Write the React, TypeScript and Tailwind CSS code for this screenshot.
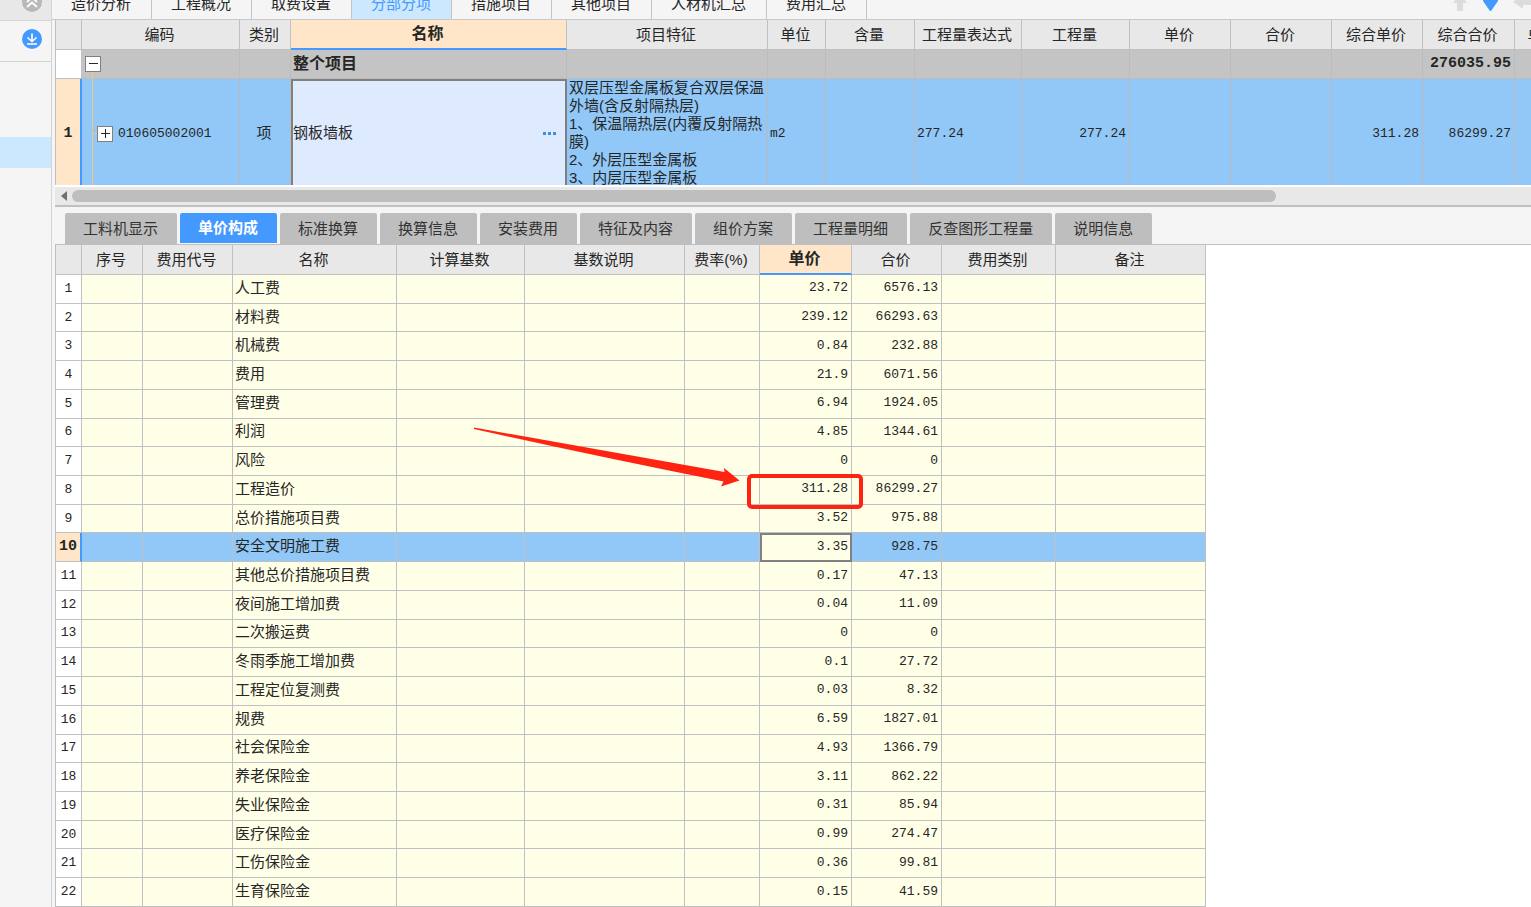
import React, { useState } from 'react';
import clsx from 'clsx';

interface FeeRow {
  name: string;
  price: string;
  total: string;
}

const TOP_TABS = ['造价分析', '工程概况', '取费设置', '分部分项', '措施项目', '其他项目', '人材机汇总', '费用汇总'];

const DETAIL_TABS = [
  '工料机显示',
  '单价构成',
  '标准换算',
  '换算信息',
  '安装费用',
  '特征及内容',
  '组价方案',
  '工程量明细',
  '反查图形工程量',
  '说明信息',
];

const ITEM_COLUMNS = [
  { label: '', width: 'w-[27px]' },
  { label: '编码', width: 'w-[158px]' },
  { label: '类别', width: 'w-[51px]' },
  { label: '名称', width: 'w-[276px]' },
  { label: '项目特征', width: 'w-[201px]' },
  { label: '单位', width: 'w-[58px]' },
  { label: '含量', width: 'w-[89px]' },
  { label: '工程量表达式', width: 'w-[107px]' },
  { label: '工程量', width: 'w-[108px]' },
  { label: '单价', width: 'w-[101px]' },
  { label: '合价', width: 'w-[101px]' },
  { label: '综合单价', width: 'w-[91px]' },
  { label: '综合合价', width: 'w-[92px]' },
  { label: '单价', width: 'w-[58px]' },
];

const FEE_COLUMNS = [
  { label: '', width: 'w-[27px]' },
  { label: '序号', width: 'w-[61px]' },
  { label: '费用代号', width: 'w-[90px]' },
  { label: '名称', width: 'w-[164px]' },
  { label: '计算基数', width: 'w-[128px]' },
  { label: '基数说明', width: 'w-[160px]' },
  { label: '费率(%)', width: 'w-[75px]' },
  { label: '单价', width: 'w-[92px]' },
  { label: '合价', width: 'w-[90px]' },
  { label: '费用类别', width: 'w-[114px]' },
  { label: '备注', width: 'w-[150px]' },
];

const FEE_ROWS: FeeRow[] = [
  { name: '人工费', price: '23.72', total: '6576.13' },
  { name: '材料费', price: '239.12', total: '66293.63' },
  { name: '机械费', price: '0.84', total: '232.88' },
  { name: '费用', price: '21.9', total: '6071.56' },
  { name: '管理费', price: '6.94', total: '1924.05' },
  { name: '利润', price: '4.85', total: '1344.61' },
  { name: '风险', price: '0', total: '0' },
  { name: '工程造价', price: '311.28', total: '86299.27' },
  { name: '总价措施项目费', price: '3.52', total: '975.88' },
  { name: '安全文明施工费', price: '3.35', total: '928.75' },
  { name: '其他总价措施项目费', price: '0.17', total: '47.13' },
  { name: '夜间施工增加费', price: '0.04', total: '11.09' },
  { name: '二次搬运费', price: '0', total: '0' },
  { name: '冬雨季施工增加费', price: '0.1', total: '27.72' },
  { name: '工程定位复测费', price: '0.03', total: '8.32' },
  { name: '规费', price: '6.59', total: '1827.01' },
  { name: '社会保险金', price: '4.93', total: '1366.79' },
  { name: '养老保险金', price: '3.11', total: '862.22' },
  { name: '失业保险金', price: '0.31', total: '85.94' },
  { name: '医疗保险金', price: '0.99', total: '274.47' },
  { name: '工伤保险金', price: '0.36', total: '99.81' },
  { name: '生育保险金', price: '0.15', total: '41.59' },
];

const FEATURE_TEXT = `双层压型金属板复合双层保温
外墙(含反射隔热层)
1、保温隔热层(内覆反射隔热
膜)
2、外层压型金属板
3、内层压型金属板`;

const MONO = "font-['Liberation_Mono',monospace] text-[13px]";

const Sidebar: React.FC = () => (
  <aside className="w-[52px] shrink-0 border-r border-[#d4d4d4] bg-[#f5f5f5]">
    <div className="flex h-[21px] items-end justify-center border-b border-[#d4d4d4] bg-[#e8e8e8] pl-3">
      <button aria-label="收起" className="mb-2">
        <svg width="20" height="20" viewBox="0 0 20 20" className="block">
          <circle cx="10" cy="10" r="10" fill="#b8b8b8" />
          <path d="M5 10l5-4.5 5 4.5M5 15l5-4.5 5 4.5" fill="none" stroke="#fff" strokeWidth="1.8" />
        </svg>
      </button>
    </div>
    <div className="flex h-[41px] items-center justify-center border-b border-[#d4d4d4] pb-1 pl-3">
      <button aria-label="下载">
        <svg width="20" height="20" viewBox="0 0 20 20" className="block">
          <circle cx="10" cy="10" r="10" fill="#4499ff" />
          <path d="M10 4.5v8M5.5 8.5L10 12.5l4.5-4M5 15h10" fill="none" stroke="#fff" strokeWidth="1.6" />
        </svg>
      </button>
    </div>
    <div className="mt-[75px] h-[31px] bg-[#cce8ff]" />
  </aside>
);

const TopBar: React.FC = () => {
  const [active, setActive] = useState(3);

  return (
    <div className="flex h-5 shrink-0 items-end overflow-hidden border-b border-[#c8c8c8]">
      {TOP_TABS.map((tab, i) => (
        <button
          key={tab}
          onClick={() => setActive(i)}
          className={clsx(
            'h-[30px] shrink-0 border-r border-[#c4c4c4] pl-[19px] pr-5 leading-[30px]',
            i === active ? 'bg-[#cce8ff] text-[#4499ff]' : 'text-[#262626]',
          )}
        >
          {tab}
        </button>
      ))}
      <div className="ml-auto flex shrink-0 items-end gap-3 self-start">
        <button aria-label="上移">
          <svg width="14" height="11" viewBox="0 0 14 11" className="block">
            <path d="M4 11V3H0L3-1H11L14 3H10V11Z" fill="#dcdcdc" />
          </svg>
        </button>
        <button aria-label="下移">
          <svg width="22" height="11" viewBox="0 0 22 11" className="block">
            <path d="M4 0H19V1L12 11H11L4 1Z" fill="#4499ff" />
          </svg>
        </button>
        <button aria-label="左移">
          <svg width="18" height="11" viewBox="0 0 18 11" className="block">
            <path d="M0 2L10-6V-1H18V5H10V9Z" fill="#dcdcdc" />
          </svg>
        </button>
      </div>
    </div>
  );
};

interface HeaderProps {
  columns: { label: string; width: string }[];
  current: number;
}

const HeaderRow: React.FC<HeaderProps> = ({ columns, current }) => (
  <tr className="h-[30px]">
    {columns.map((col, i) => (
      <th
        key={i}
        className={clsx(
          'whitespace-nowrap border-r border-[#c0c0c0] py-0 pl-0 pr-[2px] text-center',
          col.width,
          i === 0 && 'border-l',
          i === current
            ? 'border-b-2 border-b-[#4499ff] bg-[#ffe6c8] text-base font-bold leading-5'
            : 'border-b bg-[#e8e8e8] font-normal leading-5',
        )}
      >
        {col.label}
      </th>
    ))}
  </tr>
);

const ItemTable: React.FC = () => {
  const summary = 'border-r border-b border-[#bcbcbc] bg-[#c4c4c4] p-0';
  const picked = 'border-r border-[#bababa] bg-[#91c8f7] p-0';

  return (
    <div className="shrink-0 overflow-hidden border-b-2 border-white">
      <table className="w-[1518px] table-fixed border-separate border-spacing-0">
        <thead>
          <HeaderRow columns={ITEM_COLUMNS} current={3} />
        </thead>
        <tbody>
          <tr className="h-[29px]">
            <td className="border-x border-b border-[#c0c0c0] bg-white p-0" />
            <td className={summary}>
              <button aria-label="折叠" className="ml-[3px] block size-4 border border-[#808080] bg-white">
                <svg viewBox="0 0 14 14" className="block">
                  <path d="M3 6.5H12" stroke="#262626" />
                </svg>
              </button>
            </td>
            <td className={summary} />
            <td className={clsx(summary, 'pl-[2px] text-base font-bold leading-5')}>整个项目</td>
            {ITEM_COLUMNS.slice(4, 12).map((_, i) => (
              <td key={i} className={summary} />
            ))}
            <td
              className={clsx(
                summary,
                "pr-[3px] text-right font-['Liberation_Mono',monospace] text-[15px] font-bold leading-5",
              )}
            >
              276035.95
            </td>
            <td className={summary} />
          </tr>
          <tr className="h-[106px]">
            <td
              className={clsx(
                'border-l border-r-2 border-l-[#c0c0c0] border-r-[#4499ff] bg-[#ffe6c8] px-0 pb-0 pt-1 text-center font-bold',
                "font-['Liberation_Mono',monospace] text-[15px]",
              )}
            >
              1
            </td>
            <td className={picked}>
              <div className="relative flex h-[106px] items-center pl-[15px] pt-[3px]">
                <svg width="16" height="113" className="absolute -top-[7px] left-0" stroke="#f5c47c">
                  <path d="M10.5 0V113M10 61.5H16" fill="none" />
                </svg>
                <button aria-label="展开" className="relative block size-4 border border-[#808080] bg-white">
                  <svg viewBox="0 0 14 14" className="block">
                    <path d="M3 6.5H12M7.5 2V11" stroke="#262626" />
                  </svg>
                </button>
                <span className={clsx('pl-[5px]', MONO)}>010605002001</span>
              </div>
            </td>
            <td className={clsx(picked, 'pr-[2px] pt-[2px] text-center')}>项</td>
            <td className="border-2 border-b-0 border-[#808080] bg-[#deebff] p-0">
              <div className="flex items-center justify-between pr-2">
                <span>钢板墙板</span>
                <button aria-label="更多">
                  <svg width="14" height="4" viewBox="0 0 14 4" fill="#3f8fe0" className="block">
                    <path d="M0 1h3v3h-3zM5 1h3v3h-3zM10 1h3v3h-3z" />
                  </svg>
                </button>
              </div>
            </td>
            <td className={picked}>
              <div className="h-[106px] overflow-hidden whitespace-pre pl-[2px] leading-[18px]">{FEATURE_TEXT}</div>
            </td>
            <td className={clsx(picked, 'pl-[2px] pt-1', MONO)}>m2</td>
            <td className={picked} />
            <td className={clsx(picked, 'pl-[2px] pt-1', MONO)}>277.24</td>
            <td className={clsx(picked, 'pr-[3px] pt-1 text-right', MONO)}>277.24</td>
            <td className={picked} />
            <td className={picked} />
            <td className={clsx(picked, 'pr-[3px] pt-1 text-right', MONO)}>311.28</td>
            <td className={clsx(picked, 'pr-[3px] pt-1 text-right', MONO)}>86299.27</td>
            <td className={picked} />
          </tr>
        </tbody>
      </table>
    </div>
  );
};

const ScrollBar: React.FC = () => (
  <div className="flex h-5 shrink-0 items-center border-b-2 border-[#c0c0c0] bg-[#e8e8e8]">
    <button aria-label="向左滚动" className="flex w-[17px] shrink-0 justify-center">
      <svg width="6" height="10" viewBox="0 0 6 10">
        <path d="M6 0V10L0 5Z" fill="#6e6e76" />
      </svg>
    </button>
    <div className="flex-1">
      <div className="h-3 w-[82.5%] rounded-full bg-[#bebebe]" />
    </div>
  </div>
);

const DetailTabs: React.FC = () => {
  const [active, setActive] = useState(1);

  return (
    <div className="flex shrink-0 items-start gap-[3px] border-b border-[#c0c0c0] pl-[10px] pt-[6px]">
      {DETAIL_TABS.map((tab, i) => (
        <button
          key={tab}
          onClick={() => setActive(i)}
          className={clsx(
            'shrink-0 whitespace-nowrap rounded-t-xs pl-[18px] pr-[19px] pt-px',
            i === active ? 'h-[30px] bg-[#4499ff] font-bold text-white' : 'h-[31px] bg-[#bebebe] text-[#333]',
          )}
        >
          {tab}
        </button>
      ))}
    </div>
  );
};

const FeeTable: React.FC = () => {
  const selected = 9;

  return (
    <div className="relative min-h-0 flex-1 bg-white">
      <table className="h-full w-[1151px] table-fixed border-separate border-spacing-0">
        <thead>
          <HeaderRow columns={FEE_COLUMNS} current={7} />
        </thead>
        <tbody>
          {FEE_ROWS.map((row, i) => {
            const on = i === selected;
            const cell = clsx(
              'border-r border-b border-[#c0c0c0] px-0 pt-0 leading-5',
              on ? 'bg-[#91c8f7]' : 'bg-[#ffffe8]',
            );
            return (
              <tr key={row.name} className="h-7">
                <td
                  className={clsx(
                    "border-b border-l border-[#c0c0c0] p-0 text-center font-['Liberation_Mono',monospace] leading-5",
                    on
                      ? 'border-r-2 border-r-[#4499ff] bg-[#ffe6c8] text-[15px] font-bold'
                      : 'border-r bg-white text-[13px]',
                  )}
                >
                  {i + 1}
                </td>
                <td className={cell} />
                <td className={cell} />
                <td className={clsx(cell, 'whitespace-nowrap pb-[2px] pl-[2px]')}>{row.name}</td>
                <td className={cell} />
                <td className={cell} />
                <td className={cell} />
                <td
                  className={clsx(
                    'bg-[#ffffe8] pb-px pl-0 pt-0 text-right leading-5',
                    MONO,
                    on ? 'border-2 border-[#808080] pr-[2px]' : 'border-r border-b border-[#c0c0c0] pr-[3px]',
                  )}
                >
                  {row.price}
                </td>
                <td className={clsx(cell, 'pb-px pr-[3px] text-right', MONO)}>{row.total}</td>
                <td className={cell} />
                <td className={cell} />
              </tr>
            );
          })}
        </tbody>
      </table>
      {/* red callout drawn over the grid */}
      <svg width="820" height="270" className="pointer-events-none absolute left-0 top-0">
        <path d="M419 182.5L669.5 227L669 223L684.5 235.5L666 241.5L668.5 236.5Q540 211 419 184Z" fill="#ff2412" />
        <rect x="694" y="231" width="112" height="31" rx="3" fill="none" stroke="#ff2412" strokeWidth="4" />
      </svg>
    </div>
  );
};

const App: React.FC = () => {
  return (
    <div className="flex h-screen overflow-hidden bg-[#f5f5f5] font-['Liberation_Sans','Noto_Sans_CJK_SC',sans-serif] text-[15px] text-[#262626]">
      <Sidebar />
      <main className="flex min-w-0 flex-1 flex-col">
        <TopBar />
        <div className="flex min-h-0 flex-1 flex-col pl-[3px]">
          <ItemTable />
          <ScrollBar />
          <DetailTabs />
          <FeeTable />
        </div>
      </main>
    </div>
  );
};

export default App;
